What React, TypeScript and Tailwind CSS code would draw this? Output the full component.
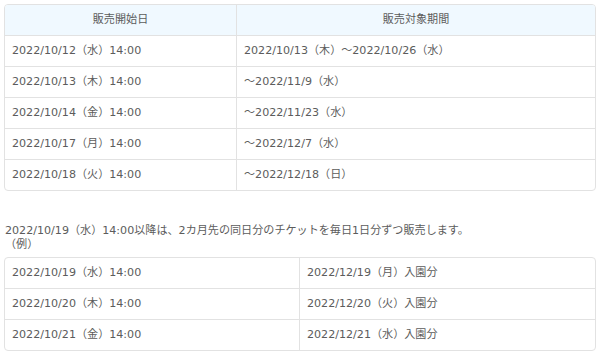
import React from "react";

const font = { fontFamily: '"DejaVu Sans", "Noto Sans CJK JP", sans-serif' };

const rows1: [string, string][] = [
  ["2022/10/12（水）14:00", "2022/10/13（木）～2022/10/26（水）"],
  ["2022/10/13（木）14:00", "～2022/11/9（水）"],
  ["2022/10/14（金）14:00", "～2022/11/23（水）"],
  ["2022/10/17（月）14:00", "～2022/12/7（水）"],
  ["2022/10/18（火）14:00", "～2022/12/18（日）"],
];

const rows2: [string, string][] = [
  ["2022/10/19（水）14:00", "2022/12/19（月）入園分"],
  ["2022/10/20（木）14:00", "2022/12/20（火）入園分"],
  ["2022/10/21（金）14:00", "2022/12/21（水）入園分"],
];

export default function App() {
  return (
    <div className="w-[600px] h-[354px] bg-white px-1 pt-[4px] text-[11.1px] text-[#5c5c5c]" style={font}>
      <div className="rounded-[4px] border border-[#e2e2e2] overflow-hidden">
        <div className="grid grid-cols-[232px_1fr] bg-[#f0f9ff] border-b border-[#e2e2e2]">
          <div className="py-[6px] leading-[18px] text-center border-r border-[#e2e2e2]">販売開始日</div>
          <div className="py-[6px] leading-[18px] text-center">販売対象期間</div>
        </div>
        {rows1.map(([a, b], i) => (
          <div
            key={i}
            className={`grid grid-cols-[232px_1fr] ${i < rows1.length - 1 ? "border-b border-[#e2e2e2]" : ""}`}
          >
            <div className="py-[6px] px-[7px] leading-[18px] border-r border-[#e2e2e2] whitespace-nowrap">{a}</div>
            <div className="py-[6px] px-[7px] leading-[18px] whitespace-nowrap">{b}</div>
          </div>
        ))}
      </div>
      <div className="mt-[33px] leading-[13px] pl-[1px]">
        <p>2022/10/19（水）14:00以降は、2カ月先の同日分のチケットを毎日1日分ずつ販売します。</p>
        <p className="mt-[1px]">（例）</p>
      </div>
      <div className="mt-[6px] rounded-[4px] border border-[#e2e2e2] overflow-hidden">
        {rows2.map(([a, b], i) => (
          <div
            key={i}
            className={`grid grid-cols-2 ${i < rows2.length - 1 ? "border-b border-[#e2e2e2]" : ""}`}
          >
            <div className="py-[6px] px-[7px] leading-[18px] border-r border-[#e2e2e2] whitespace-nowrap">{a}</div>
            <div className="py-[6px] px-[7px] leading-[18px] whitespace-nowrap">{b}</div>
          </div>
        ))}
      </div>
    </div>
  );
}
